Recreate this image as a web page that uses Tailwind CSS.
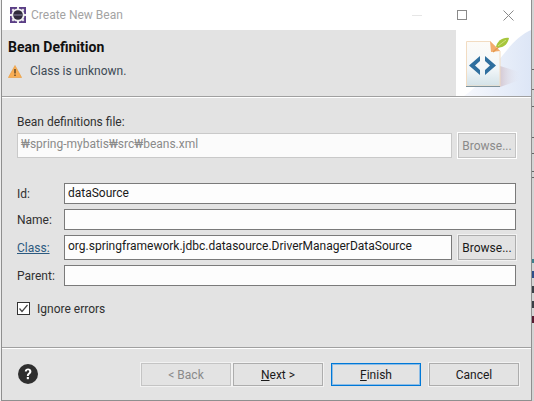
<!DOCTYPE html>
<html lang="ko">
<head>
  <meta charset="UTF-8">
  <title>Create New Bean</title>
  <script src="https://cdn.jsdelivr.net/npm/@tailwindcss/browser@4"></script>
</head>
<body class="w-[534px] h-[401px] overflow-hidden bg-[#eeeeee] font-['Roboto','Noto_Sans_CJK_KR',sans-serif] text-[12px] text-[#1a1a1a]">

<div class="flex h-[401px]">
  <!-- Window -->
  <div class="w-[531px] h-[401px] ml-[1px] border-x border-b border-[#8f8f8f] flex flex-col bg-[#e3e3e3]">

    <!-- Title bar -->
    <div class="h-[30px] bg-white flex items-center pl-[8px] shrink-0">
      <svg class="w-4 h-4" viewBox="0 0 16 16">
        <rect width="16" height="16" fill="#5b3f86"/>
        <circle cx="8" cy="8" r="6.6" fill="#f1f1f1"/>
        <g stroke="#f1f1f1" stroke-width="2"><path d="M8 0v16M0 8h16M2.3 2.3l11.4 11.4M13.7 2.3 2.3 13.7"/></g>
        <circle cx="8" cy="8" r="4.8" fill="#2f2b3a"/>
        <path d="M3.5 8h9" stroke="#8d86a5" stroke-width="1"/>
      </svg>
      <span class="ml-[5px] text-[#a3a3a3]">Create New Bean</span>
      <div class="ml-auto flex items-center">
        <div class="w-[10px] h-px bg-[#e6e6e6] mr-[35px]"></div>
        <div class="w-[10px] h-[10px] border border-[#8a8a8a] mr-[36px]"></div>
        <svg class="w-[11px] h-[11px] mr-[17px]" viewBox="0 0 11 11"><path d="M.5.5l10 10M10.5.5l-10 10" stroke="#8a8a8a" fill="none"/></svg>
      </div>
    </div>

    <!-- Header -->
    <div class="h-[66px] flex shrink-0">
      <div class="flex-1 pl-[6px] pt-[9px]">
        <div class="font-bold text-[14px] leading-[16px] text-[#111111]">Bean Definition</div>
        <div class="flex items-center mt-[8px] leading-[16px] text-[#3d4a55]">
          <svg class="w-[14px] h-[13px]" viewBox="0 0 14 13"><path d="M7 .5 13.6 12.5H.4z" fill="#f9ae55" stroke="#e89a3c" stroke-width=".6"/><path d="M7 4v4.5M7 9.5v1.6" stroke="#5b4326" stroke-width="1.4"/></svg>
          <span class="ml-[8px]">Class is unknown.</span>
        </div>
      </div>
      <svg class="w-[75px] h-[66px]" viewBox="0 0 75 66">
        <defs>
          <linearGradient id="sky" x1="0" y1="0" x2="1" y2="0"><stop offset="0" stop-color="#f6f8fd"/><stop offset="1" stop-color="#dde6f6"/></linearGradient>
          <linearGradient id="shade" x1="0" y1="0" x2="1" y2="0"><stop offset="0" stop-color="#d5c9d3"/><stop offset="1" stop-color="#e3e6f2" stop-opacity="0"/></linearGradient>
          <linearGradient id="sheet" x1="0" y1="0" x2="0" y2="1"><stop offset="0" stop-color="#fdfbf8"/><stop offset=".6" stop-color="#f3f7f9"/><stop offset="1" stop-color="#d3e2e8"/></linearGradient>
        </defs>
        <rect width="75" height="66" fill="#ffffff"/>
        <path d="M75 0C58 8 50 22 38 36 30 46 20 58 8 66H75z" fill="url(#sky)"/>
        <path d="M44 36 64 42V50L44 57z" fill="url(#shade)"/>
        <path d="M10.500 11.500H34L44 21V56H10.500z" fill="url(#sheet)" stroke="#f2dcc2"/>
        <path d="M10 56h34v1H10z" fill="#7e929c"/>
        <path d="M34 11 44 21 35 22z" fill="#f3ac6d"/>
        <path d="M37 22 46 14" stroke="#e59a4e" stroke-width="1.500"/>
        <path d="M40 17C41 11 47 7 53 8 52 14 47 19 40 17z" fill="#a6c63c"/>
        <path d="M42 16 50 10" stroke="#dce88f" stroke-width=".8"/>
        <path d="M24 26 13 35.500 24 45V40L19 35.500 24 31z" fill="#2f6f9f"/>
        <path d="M29 26 40 35.500 29 45V40L34 35.500 29 31z" fill="#2f6f9f"/>
      </svg>
    </div>
    <div class="h-px bg-[#a0a0a0] shrink-0"></div>
    <div class="h-px bg-white shrink-0"></div>

    <!-- Form -->
    <div class="flex-1 flex flex-col pl-[15px] pr-[15px]">
      <div class="mt-[16px] leading-[16px] text-[#303030]">Bean definitions file:</div>
      <div class="flex mt-[3px] gap-[6px]">
        <div class="flex-1 h-[25px] bg-[#fbfbfb] border border-[#c9c9c9] pl-[3px] leading-[21px] text-[#8a8a8a]">₩spring-mybatis₩src₩beans.xml</div>
        <button class="w-[58px] h-[25px] border border-[#c4c4c4] outline outline-white text-[#8a8a8a]">Browse...</button>
      </div>

      <div class="flex items-center mt-[25px] h-[21px]">
        <span class="w-[47px] text-[#303030]">Id:</span>
        <div class="flex-1 h-[21px] bg-[#fdfdfd] border border-[#7a7a7a] pl-[3px] leading-[19px]">dataSource</div>
      </div>
      <div class="flex items-center mt-[5px] h-[21px]">
        <span class="w-[47px] text-[#303030]">Name:</span>
        <div class="flex-1 h-[21px] bg-[#fdfdfd] border border-[#7a7a7a]"></div>
      </div>
      <div class="flex items-center mt-[5px] h-[25px]">
        <a class="w-[47px] underline text-[#2c5a80]">Class:</a>
        <div class="flex-1 h-[25px] bg-[#fdfdfd] border border-[#7a7a7a] pl-[3px] leading-[21px]">org.springframework.jdbc.datasource.DriverManagerDataSource</div>
        <button class="ml-[6px] w-[58px] h-[25px] border border-[#adadad] outline outline-[#f2f2f2] text-[#1a1a1a]">Browse...</button>
      </div>
      <div class="flex items-center mt-[5px] h-[21px]">
        <span class="w-[47px] text-[#303030]">Parent:</span>
        <div class="flex-1 h-[21px] bg-[#fdfdfd] border border-[#7a7a7a]"></div>
      </div>

      <div class="flex items-center mt-[16px] h-[13px]">
        <div class="w-[13px] h-[13px] bg-white border border-[#333333] flex items-center justify-center">
          <svg class="w-[11px] h-[11px]" viewBox="0 0 11 11"><path d="M1.500 5.500 4 8.500 9.500 2" stroke="#444444" stroke-width="1.200" fill="none"/></svg>
        </div>
        <span class="ml-[7px] text-[#303030]">Ignore errors</span>
      </div>
    </div>

    <div class="h-px bg-[#a0a0a0] shrink-0"></div>
    <div class="h-px bg-white shrink-0"></div>

    <!-- Buttons -->
    <div class="h-[51px] flex items-start pt-[14px] pl-[16px] shrink-0">
      <svg class="w-5 h-5 mt-px" viewBox="0 0 20 20">
        <circle cx="10" cy="10" r="10" fill="#2f2f2f"/>
        <path d="M6.800 7.600C6.800 5.600 8.200 4.500 10.100 4.500s3.300 1.100 3.300 2.900c0 2.600-2.600 2.500-2.600 4.600H8.900c0-3 2.300-3 2.300-4.500 0-.8-.5-1.200-1.200-1.200-.8 0-1.200.5-1.200 1.300z" fill="#ffffff"/>
        <rect x="8.800" y="13" width="2.100" height="2.200" fill="#ffffff"/>
      </svg>
      <button class="ml-[103px] w-[90px] h-[23px] border border-[#c4c4c4] outline outline-[#f2f2f2] text-[#8a8a8a]">&lt; Back</button>
      <button class="ml-[2px] w-[90px] h-[23px] border border-[#adadad] outline outline-[#f2f2f2]"><span class="underline">N</span>ext &gt;</button>
      <button class="ml-[8px] w-[90px] h-[23px] border border-[#0078d7] shadow-[inset_0_0_0_1px_#8dbde6]"><span class="underline">F</span>inish</button>
      <button class="ml-[8px] w-[90px] h-[23px] border border-[#adadad] outline outline-[#f2f2f2]">Cancel</button>
    </div>
  </div>

  <!-- Sliver of the window behind -->
  <svg class="w-[2px] h-[401px] shrink-0" viewBox="0 0 2 401">
    <rect width="2" height="401" fill="#d4d4d4"/>
    <path d="M0 69.500h2M0 89.500h2M0 106.500h2M0 137.500h2M0 153.500h2M0 171.500h2M0 177.500h2M0 262.500h2" stroke="#666666"/>
    <path d="M0 259h2v4H0z" fill="#3f7f8c"/>
    <path d="M0 271h2v7H0z" fill="#2f4f8a"/>
    <path d="M0 286h2v7H0z" fill="#3a3f46"/>
    <path d="M0 301h2v7H0z" fill="#3a3f46"/>
    <path d="M0 316h2v7H0z" fill="#5a1a30"/>
  </svg>
</div>

</body>
</html>
